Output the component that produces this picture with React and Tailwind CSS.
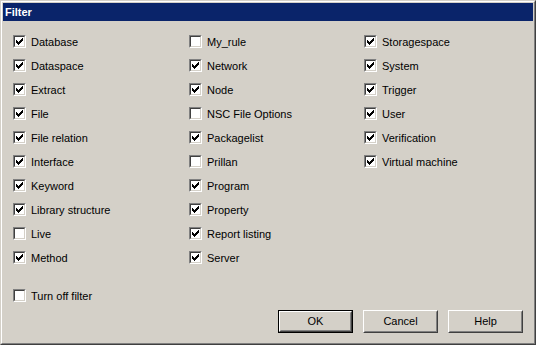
import React from "react";

const columns = [
  [
    ["Database", true],
    ["Dataspace", true],
    ["Extract", true],
    ["File", true],
    ["File relation", true],
    ["Interface", true],
    ["Keyword", true],
    ["Library structure", true],
    ["Live", false],
    ["Method", true],
  ],
  [
    ["My_rule", false],
    ["Network", true],
    ["Node", true],
    ["NSC File Options", false],
    ["Packagelist", true],
    ["Prillan", false],
    ["Program", true],
    ["Property", true],
    ["Report listing", true],
    ["Server", true],
  ],
  [
    ["Storagespace", true],
    ["System", true],
    ["Trigger", true],
    ["User", true],
    ["Verification", true],
    ["Virtual machine", true],
  ],
];

function Check() {
  // classic 7x7 pixel tick
  const px = [
    [6, 0], [5, 1], [6, 1], [0, 2], [4, 2], [5, 2], [6, 2],
    [0, 3], [1, 3], [3, 3], [4, 3], [5, 3],
    [0, 4], [1, 4], [2, 4], [3, 4], [4, 4],
    [1, 5], [2, 5], [3, 5], [2, 6],
  ];
  return (
    <svg width="7" height="7" viewBox="0 0 7 7" shapeRendering="crispEdges" className="block">
      {px.map(([x, y], i) => (
        <rect key={i} x={x} y={y} width="1" height="1" fill="#000" />
      ))}
    </svg>
  );
}

function CheckBox({ label, checked }) {
  return (
    <div className="h-6 flex items-start pt-[5px] gap-[5px]">
      <div className="w-[13px] h-[13px] shrink-0 border border-t-[#808080] border-l-[#808080] border-b-white border-r-white">
        <div className="w-full h-full border border-t-[#404040] border-l-[#404040] border-b-[#d4d0c8] border-r-[#d4d0c8] bg-white pl-[1px] pt-[1px]">
          {checked && <Check />}
        </div>
      </div>
      <span className="text-[11px] leading-[13px] pt-[1px] text-black whitespace-nowrap">{label}</span>
    </div>
  );
}

function Button({ children, isDefault }) {
  return (
    <div
      className={`w-[75px] h-[23px] ${
        isDefault ? "border border-black" : ""
      }`}
    >
      <div className="w-full h-full border border-t-white border-l-white border-b-[#404040] border-r-[#404040]">
        <div className="w-full h-full border border-t-[#d4d0c8] border-l-[#d4d0c8] border-b-[#808080] border-r-[#808080] flex items-center justify-center text-[11px] text-black">
          {children}
        </div>
      </div>
    </div>
  );
}

export default function App() {
  return (
    <div
      className="w-[536px] h-[345px] bg-[#d4d0c8] select-none"
      style={{ fontFamily: '"Liberation Sans", Arial, sans-serif' }}
    >
      <div className="w-full h-full border border-t-[#d4d0c8] border-l-[#d4d0c8] border-b-[#404040] border-r-[#404040]">
        <div className="w-full h-full border border-t-white border-l-white border-b-[#808080] border-r-[#808080] p-[1px] flex flex-col">
          <div className="h-[18px] bg-[#0a246a] text-white font-bold text-[11px] leading-[18px] pl-[2px]">
            Filter
          </div>

          <div className="flex pl-[10px] pt-[9px]">
            {columns.map((col, ci) => (
              <div key={ci} className={ci === 0 ? "w-[176px]" : ci === 1 ? "w-[175px]" : "flex-1"}>
                {col.map(([label, checked]) => (
                  <CheckBox key={label} label={label} checked={checked} />
                ))}
              </div>
            ))}
          </div>

          <div className="pl-[10px] mt-[14px]">
            <CheckBox label="Turn off filter" checked={false} />
          </div>

          <div className="flex justify-end gap-[10px] pr-[10px] mt-[2px]">
            <Button isDefault>OK</Button>
            <Button>Cancel</Button>
            <Button>Help</Button>
          </div>
        </div>
      </div>
    </div>
  );
}
